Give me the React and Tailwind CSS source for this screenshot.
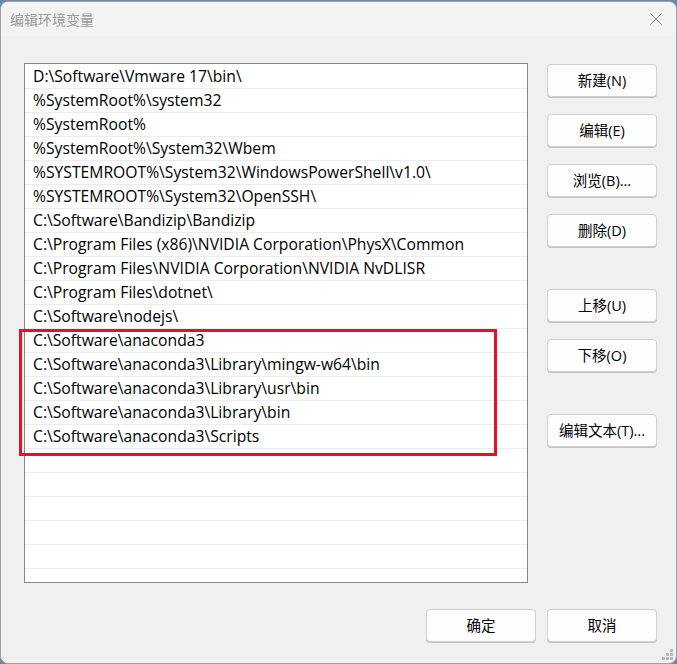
import React from 'react';

const paths = [
    'D:\\Software\\Vmware 17\\bin\\',
    '%SystemRoot%\\system32',
    '%SystemRoot%',
    '%SystemRoot%\\System32\\Wbem',
    '%SYSTEMROOT%\\System32\\WindowsPowerShell\\v1.0\\',
    '%SYSTEMROOT%\\System32\\OpenSSH\\',
    'C:\\Software\\Bandizip\\Bandizip',
    'C:\\Program Files (x86)\\NVIDIA Corporation\\PhysX\\Common',
    'C:\\Program Files\\NVIDIA Corporation\\NVIDIA NvDLISR',
    'C:\\Program Files\\dotnet\\',
    'C:\\Software\\nodejs\\',
    'C:\\Software\\anaconda3',
    'C:\\Software\\anaconda3\\Library\\mingw-w64\\bin',
    'C:\\Software\\anaconda3\\Library\\usr\\bin',
    'C:\\Software\\anaconda3\\Library\\bin',
    'C:\\Software\\anaconda3\\Scripts',
];

const rows = [...paths, ...Array(5).fill('')];

const Btn = ({ children, className = '' }) => (
    <button className={`h-[33px] w-[110px] rounded-[4px] border border-[#d0d0d0] bg-[#fdfdfd] text-[14.5px] text-black shadow-[0_1px_0_#c4c4c4] ${className}`}>
        {children}
    </button>
);

const App = () => {
    return (
        <div
            className="w-[677px] h-[664px] bg-[#6b8aa8] pt-px"
            style={{ fontFamily: '"Open Sans", "Noto Sans CJK SC", sans-serif' }}
        >
            <div className="relative w-[677px] h-[663px] rounded-[8px] border border-[#a0a0a0] bg-[#f0f0f0] overflow-hidden flex flex-col">
                {/* TITULO */}
                <div className="h-[34px] shrink-0 bg-[#f3f3f3] flex items-center justify-between pl-[9px] pr-[14px]">
                    <span className="text-[14px] text-[#9a9a9a]">编辑环境变量</span>
                    <svg width="12" height="12" viewBox="0 0 12 12" className="text-[#8a8a8a]">
                        <path d="M0.5 0.5 L11.5 11.5 M11.5 0.5 L0.5 11.5" stroke="currentColor" strokeWidth="1" />
                    </svg>
                </div>

                <div className="flex pl-[23px] pt-[27px] gap-[19px]">
                    {/* LISTA */}
                    <div className="relative w-[504px] h-[520px] pt-px border border-[#828790] bg-white overflow-hidden">
                        {rows.map((p, i) => (
                            <div key={i} className="h-[24px] border-b border-[#ececec] pl-[8px] flex items-center text-[15.7px] leading-none text-black whitespace-nowrap">
                                {p}
                            </div>
                        ))}
                    </div>

                    {/* BOTONES */}
                    <div className="flex flex-col mt-px">
                        <Btn>新建(N)</Btn>
                        <Btn className="mt-[17px]">编辑(E)</Btn>
                        <Btn className="mt-[17px]">浏览(B)...</Btn>
                        <Btn className="mt-[17px]">删除(D)</Btn>
                        <Btn className="mt-[42px]">上移(U)</Btn>
                        <Btn className="mt-[17px]">下移(O)</Btn>
                        <Btn className="mt-[42px]">编辑文本(T)...</Btn>
                    </div>
                </div>

                <div className="flex justify-end gap-[11px] pr-[19px] mt-[26px]">
                    <Btn>确定</Btn>
                    <Btn>取消</Btn>
                </div>

                {/* marco rojo */}
                <div className="absolute left-[18px] top-[327px] w-[478px] h-[127px] border-[3px] border-[#e81123] pointer-events-none" />

                {/* grip */}
                <svg width="12" height="12" viewBox="0 0 12 12" className="absolute right-[2px] bottom-[2px] text-[#b8b8b8]">
                    <rect x="8" y="0" width="3" height="3" fill="currentColor" />
                    <rect x="4" y="4" width="3" height="3" fill="currentColor" />
                    <rect x="8" y="4" width="3" height="3" fill="currentColor" />
                    <rect x="0" y="8" width="3" height="3" fill="currentColor" />
                    <rect x="4" y="8" width="3" height="3" fill="currentColor" />
                    <rect x="8" y="8" width="3" height="3" fill="currentColor" />
                </svg>
            </div>
        </div>
    );
};

export default App;
